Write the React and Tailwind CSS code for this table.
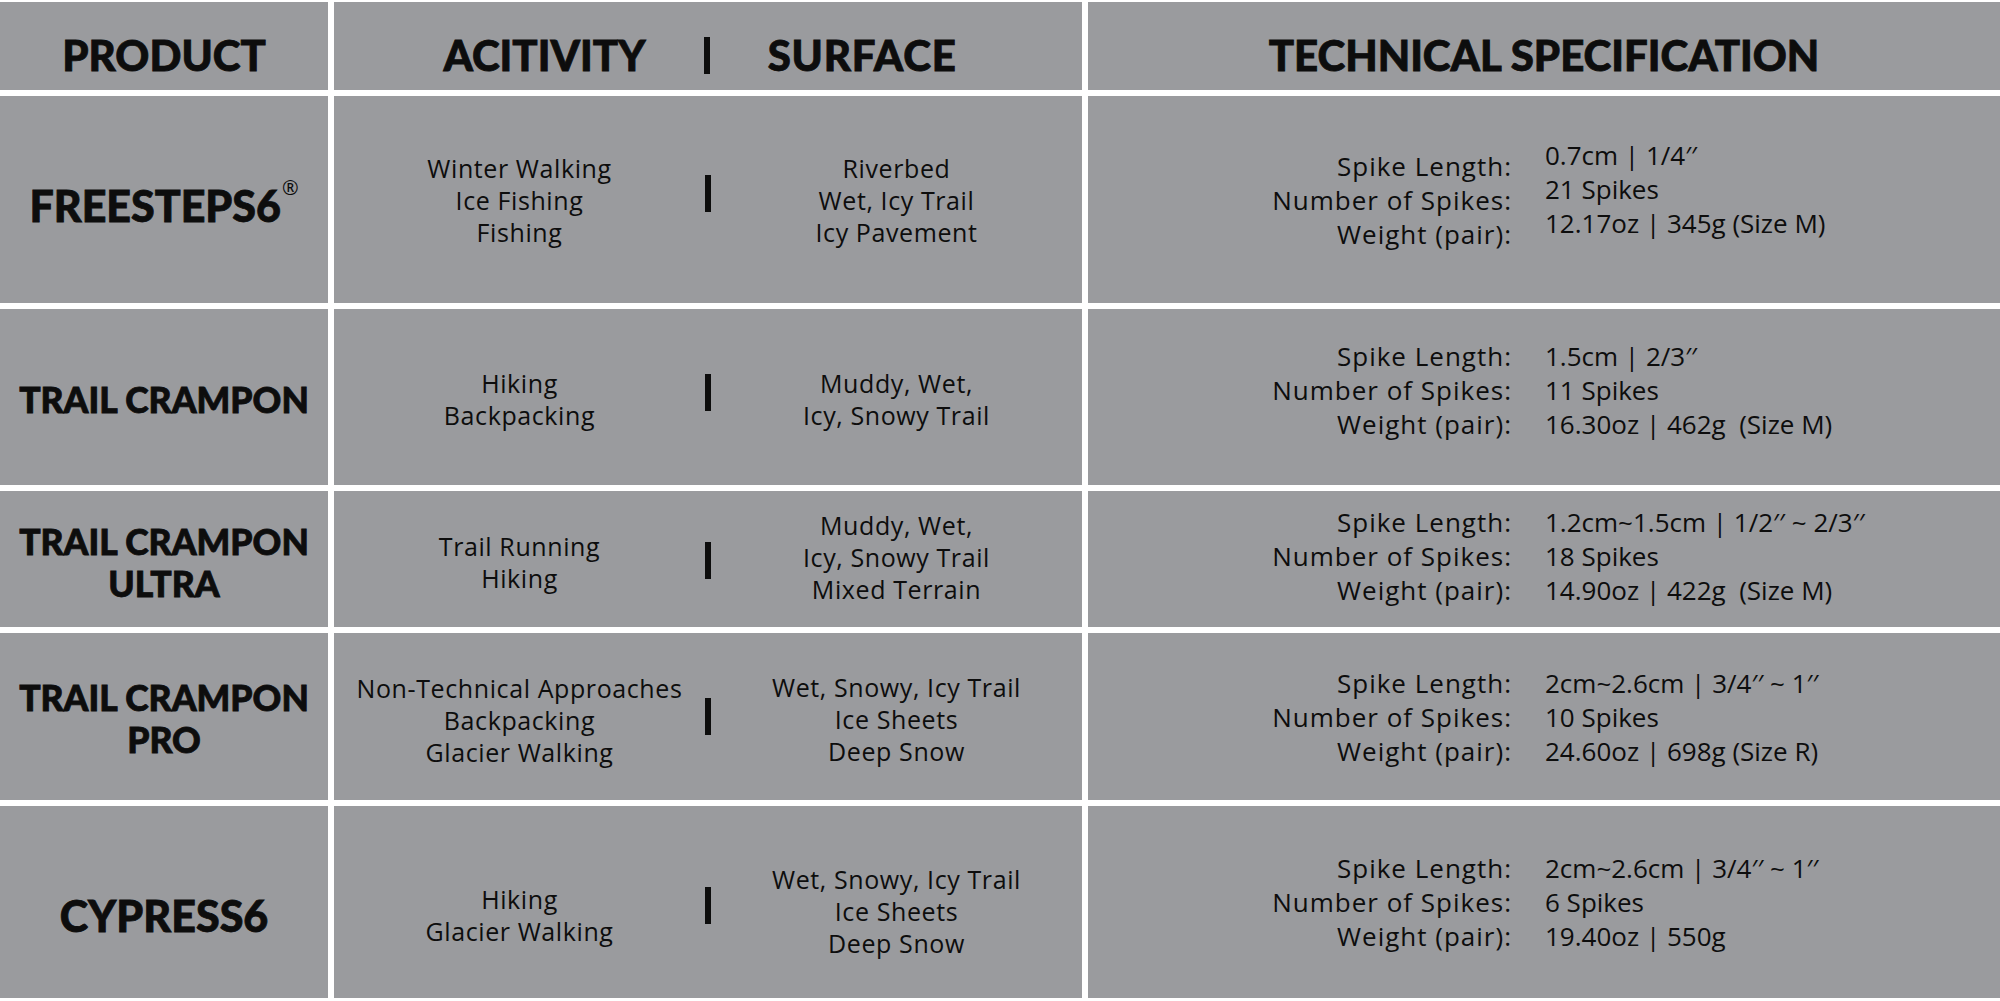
import React from "react";

const rows = [
  {
    name: ["FREESTEPS6"],
    reg: true,
    nameSize: "text-[43px] leading-[48px]",
    namePad: "pt-[12px]",
    act: ["Winter Walking", "Ice Fishing", "Fishing"],
    actPad: "",
    surf: ["Riverbed", "Wet, Icy Trail", "Icy Pavement"],
    surfPad: "",
    barPad: "pb-[12px]",
    labPad: "",
    valPad: "pb-[22px]",
    vals: ["0.7cm | 1/4′′", "21 Spikes", "12.17oz | 345g (Size M)"],
  },
  {
    name: ["TRAIL CRAMPON"],
    nameSize: "text-[35.5px] leading-[42px]",
    namePad: "pt-[6px]",
    act: ["Hiking", "Backpacking"],
    actPad: "pt-[4px]",
    surf: ["Muddy, Wet,", "Icy, Snowy Trail"],
    surfPad: "pt-[4px]",
    barPad: "pb-[10px]",
    labPad: "pb-[14px]",
    valPad: "pb-[14px]",
    vals: ["1.5cm | 2/3′′", "11 Spikes", "16.30oz | 462g  (Size M)"],
  },
  {
    name: ["TRAIL CRAMPON", "ULTRA"],
    nameSize: "text-[35.5px] leading-[42px]",
    namePad: "pt-[8px]",
    act: ["Trail Running", "Hiking"],
    actPad: "pt-[6px]",
    surf: ["Muddy, Wet,", "Icy, Snowy Trail", "Mixed Terrain"],
    surfPad: "pb-[4px]",
    barPad: "pt-[2px]",
    labPad: "pb-[6px]",
    valPad: "pb-[6px]",
    vals: ["1.2cm~1.5cm | 1/2′′ ~ 2/3′′", "18 Spikes", "14.90oz | 422g  (Size M)"],
  },
  {
    name: ["TRAIL CRAMPON", "PRO"],
    nameSize: "text-[35.5px] leading-[42px]",
    namePad: "pt-[4px]",
    act: ["Non-Technical Approaches", "Backpacking", "Glacier Walking"],
    actPad: "pt-[6px]",
    surf: ["Wet, Snowy, Icy Trail", "Ice Sheets", "Deep Snow"],
    surfPad: "pt-[4px]",
    barPad: "",
    labPad: "",
    valPad: "",
    vals: ["2cm~2.6cm | 3/4′′ ~ 1′′", "10 Spikes", "24.60oz | 698g (Size R)"],
  },
  {
    name: ["CYPRESS6"],
    nameSize: "text-[43px] leading-[48px]",
    namePad: "pt-[28px]",
    act: ["Hiking", "Glacier Walking"],
    actPad: "pt-[26px]",
    surf: ["Wet, Snowy, Icy Trail", "Ice Sheets", "Deep Snow"],
    surfPad: "pt-[18px]",
    barPad: "pt-[6px]",
    labPad: "",
    valPad: "",
    vals: ["2cm~2.6cm | 3/4′′ ~ 1′′", "6 Spikes", "19.40oz | 550g"],
  },
];

const labels = ["Spike Length:", "Number of Spikes:", "Weight (pair):"];

function Bar() {
  return <div className="w-[6px] h-[37px] bg-[#0d0d0d]" />;
}

const heavy = "font-black [-webkit-text-stroke:0.8px_#0d0d0d]";

export default function App() {
  return (
    <div className="w-[2000px] h-[1001px] bg-white pt-[2px] font-[family-name:Lato,sans-serif] text-[#0d0d0d]">
      <div className="grid grid-cols-[328px_748px_912px] grid-rows-[88px_207px_176px_136px_167px_192px] gap-[6px]">
        {/* Header */}
        <div className="bg-[#9a9b9e] flex items-center justify-center pt-[18px]">
          <span className={`text-[42px] leading-none ${heavy}`}>PRODUCT</span>
        </div>
        <div className="bg-[#9a9b9e] flex items-center justify-center gap-[58px] pt-[18px] pr-[16px]">
          <span className={`text-[42px] leading-none ${heavy}`}>ACITIVITY</span>
          <Bar />
          <span className={`text-[42px] leading-none tracking-[0.8px] ${heavy}`}>SURFACE</span>
        </div>
        <div className="bg-[#9a9b9e] flex items-center justify-center pt-[18px]">
          <span className={`text-[42px] leading-none ${heavy}`}>TECHNICAL SPECIFICATION</span>
        </div>

        {rows.map((r, i) => (
          <React.Fragment key={i}>
            <div className={`bg-[#9a9b9e] flex flex-col items-center justify-center text-center ${heavy} ${r.nameSize} ${r.namePad}`}>
              {r.name.map((n, j) => (
                <div key={j}>
                  {n}
                  {r.reg && (
                    <sup className="text-[20px] font-normal [-webkit-text-stroke:0px] align-top relative top-[6px] ml-[1px] font-[family-name:'Open_Sans',sans-serif]">®</sup>
                  )}
                </div>
              ))}
            </div>
            <div className="bg-[#9a9b9e] flex items-stretch font-[family-name:'Open_Sans',sans-serif] text-[25px] leading-[32px] tracking-[0.6px]">
              <div className={`flex-1 flex flex-col items-center justify-center text-center ${r.actPad}`}>
                {r.act.map((t, j) => (
                  <div key={j}>{t}</div>
                ))}
              </div>
              <div className={`flex items-center ${r.barPad}`}>
                <Bar />
              </div>
              <div className={`flex-1 flex flex-col items-center justify-center text-center ${r.surfPad}`}>
                {r.surf.map((t, j) => (
                  <div key={j}>{t}</div>
                ))}
              </div>
            </div>
            <div className="bg-[#9a9b9e] grid grid-cols-[424px_1fr] gap-x-[33px] text-[26px] leading-[34px] font-[family-name:'Open_Sans',sans-serif]">
              <div className={`flex flex-col justify-center items-end tracking-[1px] ${r.labPad}`}>
                {labels.map((l, j) => (
                  <div key={j}>{l}</div>
                ))}
              </div>
              <div className={`flex flex-col justify-center items-start whitespace-pre ${r.valPad}`}>
                {r.vals.map((v, j) => (
                  <div key={j}>{v}</div>
                ))}
              </div>
            </div>
          </React.Fragment>
        ))}
      </div>
    </div>
  );
}
